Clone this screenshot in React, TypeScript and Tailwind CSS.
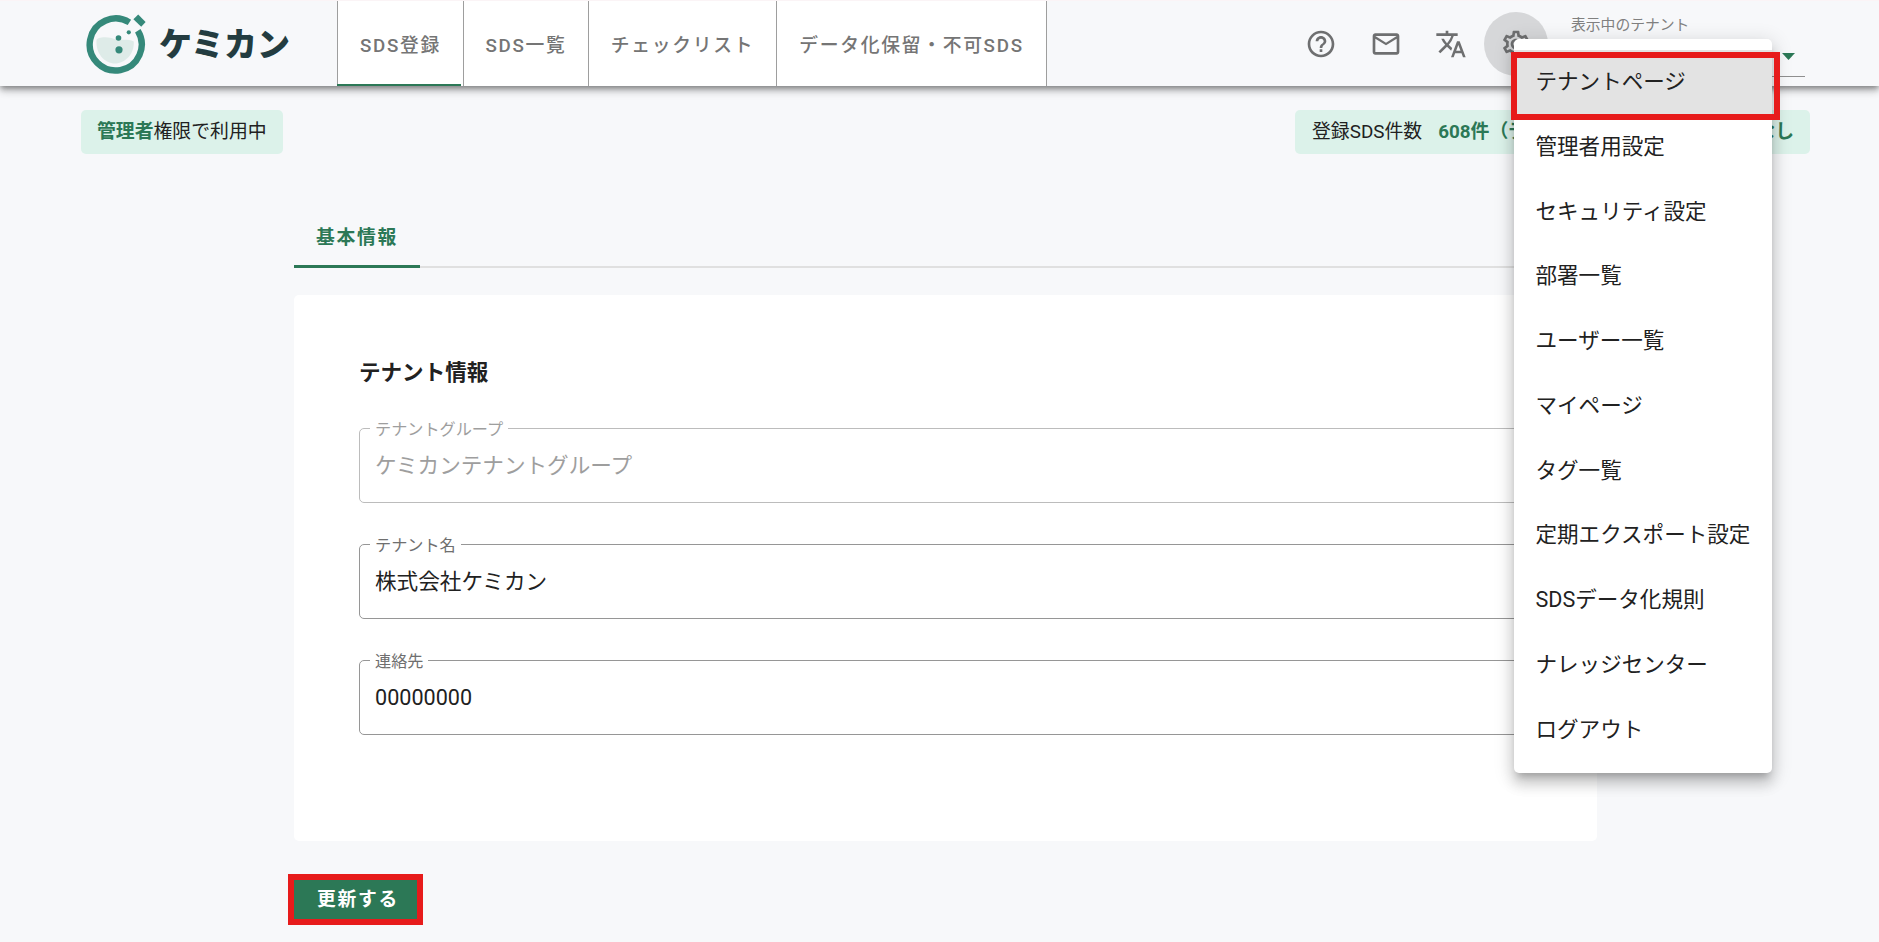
import { useState } from "react";
import { MdHelpOutline, MdMailOutline, MdOutlineSettings, MdTranslate } from "react-icons/md";

const navTabs = [
  { label: "SDS登録", width: "w-[126px]" },
  { label: "SDS一覧", width: "w-[125px]" },
  { label: "チェックリスト", width: "w-[188px]" },
  { label: "データ化保留・不可SDS", width: "w-[271px] border-r" },
];

const menuItems = [
  "テナントページ",
  "管理者用設定",
  "セキュリティ設定",
  "部署一覧",
  "ユーザー一覧",
  "マイページ",
  "タグ一覧",
  "定期エクスポート設定",
  "SDSデータ化規則",
  "ナレッジセンター",
  "ログアウト",
];

function Logo() {
  return (
    <div className="flex w-[251px] shrink-0 items-center pt-[2px]">
      <svg width="64" height="64" viewBox="0 0 64 64" className="shrink-0">
        <path d="M43.4 9.4A26 26 0 1 0 51.8 17.8" fill="none" stroke="#35897a" strokeWidth="6.4" />
        <path d="M43.5 17.5L55 6" stroke="#f7f8fa" strokeWidth="5.5" />
        <path d="M52.2 1.6L59.6 9L55.2 13.8L47.4 6.2Z" fill="#35897a" />
        <path
          d="M10.5 27C10.5 24.5 19 23.2 25.5 25C34 28.6 41 25 47.8 28.5C48.6 41 39 50.5 29 50.5C19 50.5 9.5 41 10.5 27Z"
          fill="#deebe8"
        />
        <circle cx="42.8" cy="19.3" r="2.1" fill="#35897a" />
        <circle cx="32.5" cy="25" r="2.8" fill="#35897a" />
        <circle cx="33" cy="36.8" r="3.6" fill="#35897a" />
      </svg>
      <span className="ml-[9px] text-[33px] font-black leading-none text-[#233c40]">ケミカン</span>
    </div>
  );
}

type FieldProps = {
  label: string;
  value: string;
  disabled?: boolean;
  numeric?: boolean;
};

function Field({ label, value, disabled, numeric }: FieldProps) {
  return (
    <fieldset
      className={
        disabled
          ? "h-[87px] rounded-[5px] border border-[#bcbcbc] pl-[10px] text-[#9e9e9e]"
          : "h-[87px] rounded-[5px] border border-[#969696] pl-[10px] text-[#212121]"
      }
    >
      <legend
        className={
          disabled
            ? "h-[24px] px-[5px] text-[16.15px] leading-[27px] text-[#9e9e9e]"
            : "h-[24px] px-[5px] text-[16.15px] leading-[27px] text-[#6f6f6f]"
        }
      >
        {label}
      </legend>
      <input
        defaultValue={value}
        disabled={disabled}
        className={`block h-[48px] w-full bg-transparent px-[5px] text-[21.6px] leading-[47px] outline-none ${numeric ? "pt-[2px]" : "pb-px"}`}
      />
    </fieldset>
  );
}

export default function App() {
  const [activeTab, setActiveTab] = useState(0);

  return (
    <div className="relative h-[942px] w-full overflow-hidden bg-[#f7f8fa] font-[Roboto,'Noto_Sans_CJK_JP',sans-serif] text-[#212121]">
      {/* Header */}
      <header className="relative flex h-[86px] border-t border-[#fbf4f6] bg-[#f7f8fa] pl-[86px] shadow-[0_3px_5px_-1px_rgba(0,0,0,0.3),0_5px_7px_0_rgba(0,0,0,0.18),0_1px_13px_0_rgba(0,0,0,0.14)]">
        <Logo />
        <nav className="flex">
          {navTabs.map((tab, i) => (
            <button
              key={tab.label}
              onClick={() => setActiveTab(i)}
              className={`${tab.width} relative shrink-0 whitespace-nowrap border-l border-[#9e9e9e] bg-white pt-[5px] text-[18.8px] font-medium tracking-[1.7px] text-[#757575]`}
            >
              {tab.label}
              {activeTab === i && <span className="absolute bottom-0 -left-px h-[2px] w-[124px] bg-[#2c7856]" />}
            </button>
          ))}
        </nav>
        <div className="ml-[241px] flex items-center text-[32px] text-[#6e6f70]">
          <button className="flex h-[64px] w-[65px] items-center justify-center">
            <MdHelpOutline />
          </button>
          <button className="flex h-[64px] w-[65px] items-center justify-center">
            <MdMailOutline />
          </button>
          <button className="flex h-[64px] w-[65px] items-center justify-center">
            <MdTranslate />
          </button>
          <button className="ml-px flex size-[64px] items-center justify-center rounded-full bg-[#d6d7d9]">
            <MdOutlineSettings />
          </button>
        </div>
        <div className="ml-[23px] mt-[11px] h-[65px] w-[234px] border-b border-[#8f8f8f] pt-[2px] text-[14.8px] leading-[22px] text-[#808080]">
          表示中のテナント
          <div className="flex justify-end pr-[10px] pt-[17px]">
            <svg width="13" height="7" viewBox="0 0 13 7">
              <path d="M0 0H13L6.5 7Z" fill="#2c7856" />
            </svg>
          </div>
        </div>
      </header>

      {/* Status chips */}
      <div className="flex justify-between pl-[81px] pr-[69px] pt-[24px] text-[18.85px]">
        <div className="flex h-[44px] w-[202px] items-center rounded-[5px] bg-[#dcf2ea] pl-[16px]">
          <span className="font-bold text-[#2c7856]">管理者</span>権限で利用中
        </div>
        <div className="flex h-[44px] w-[515px] items-center whitespace-nowrap rounded-[5px] bg-[#dcf2ea] pl-[17px] pr-[16px]">
          登録SDS件数
          <span className="ml-[16px] flex flex-1 justify-between font-bold text-[#2c7856]">
            <span>608件（デ</span>
            <span>なし</span>
          </span>
        </div>
      </div>

      {/* Content */}
      <main className="ml-[294px] w-[1303px] pt-[50px]">
        <div className="flex h-[64px] items-end">
          <button className="h-[64px] w-[126px] border-b-[3px] border-[#2c7856] pt-[8px] text-[18.8px] font-bold tracking-[1.68px] text-[#2c7856]">
            基本情報
          </button>
          <div className="h-[2px] flex-1 bg-[#e0e0e0]" />
        </div>

        <section className="mt-[27px] h-[546px] rounded-[5px] bg-white px-[65px] pt-[62px]">
          <h2 className="text-[21.55px] font-bold leading-[32px]">テナント情報</h2>
          <form className="mt-[27px] flex flex-col gap-[29px]">
            <Field label="テナントグループ" value="ケミカンテナントグループ" disabled />
            <Field label="テナント名" value="株式会社ケミカン" />
            <Field label="連絡先" value="00000000" numeric />
          </form>
        </section>

        <button className="-ml-[6px] mt-[33px] flex h-[51px] w-[135px] items-center justify-center border-[6px] border-[#e71b1b] bg-[#2c7856] pl-[5px] pt-[2px] text-[18.8px] font-bold tracking-[1.68px] text-white">
          更新する
        </button>
      </main>

      {/* Settings menu */}
      <div className="absolute left-[1514px] top-[39px] h-[734px] w-[258px] rounded-[5px] bg-white py-[11px] shadow-[0_7px_7px_-4px_rgba(0,0,0,0.2),0_11px_13px_1px_rgba(0,0,0,0.14),0_4px_19px_3px_rgba(0,0,0,0.12)]">
        {menuItems.map((item, i) => (
          <div
            key={item}
            className={`flex h-[64.75px] items-center whitespace-nowrap pl-[21.5px] text-[21.55px] ${i === 0 ? "bg-[#e3e3e3]" : ""}`}
          >
            {item}
          </div>
        ))}
      </div>
      <div className="absolute left-[1511px] top-[52px] h-[68px] w-[269px] border-[6px] border-[#e71b1b]" />
    </div>
  );
}
